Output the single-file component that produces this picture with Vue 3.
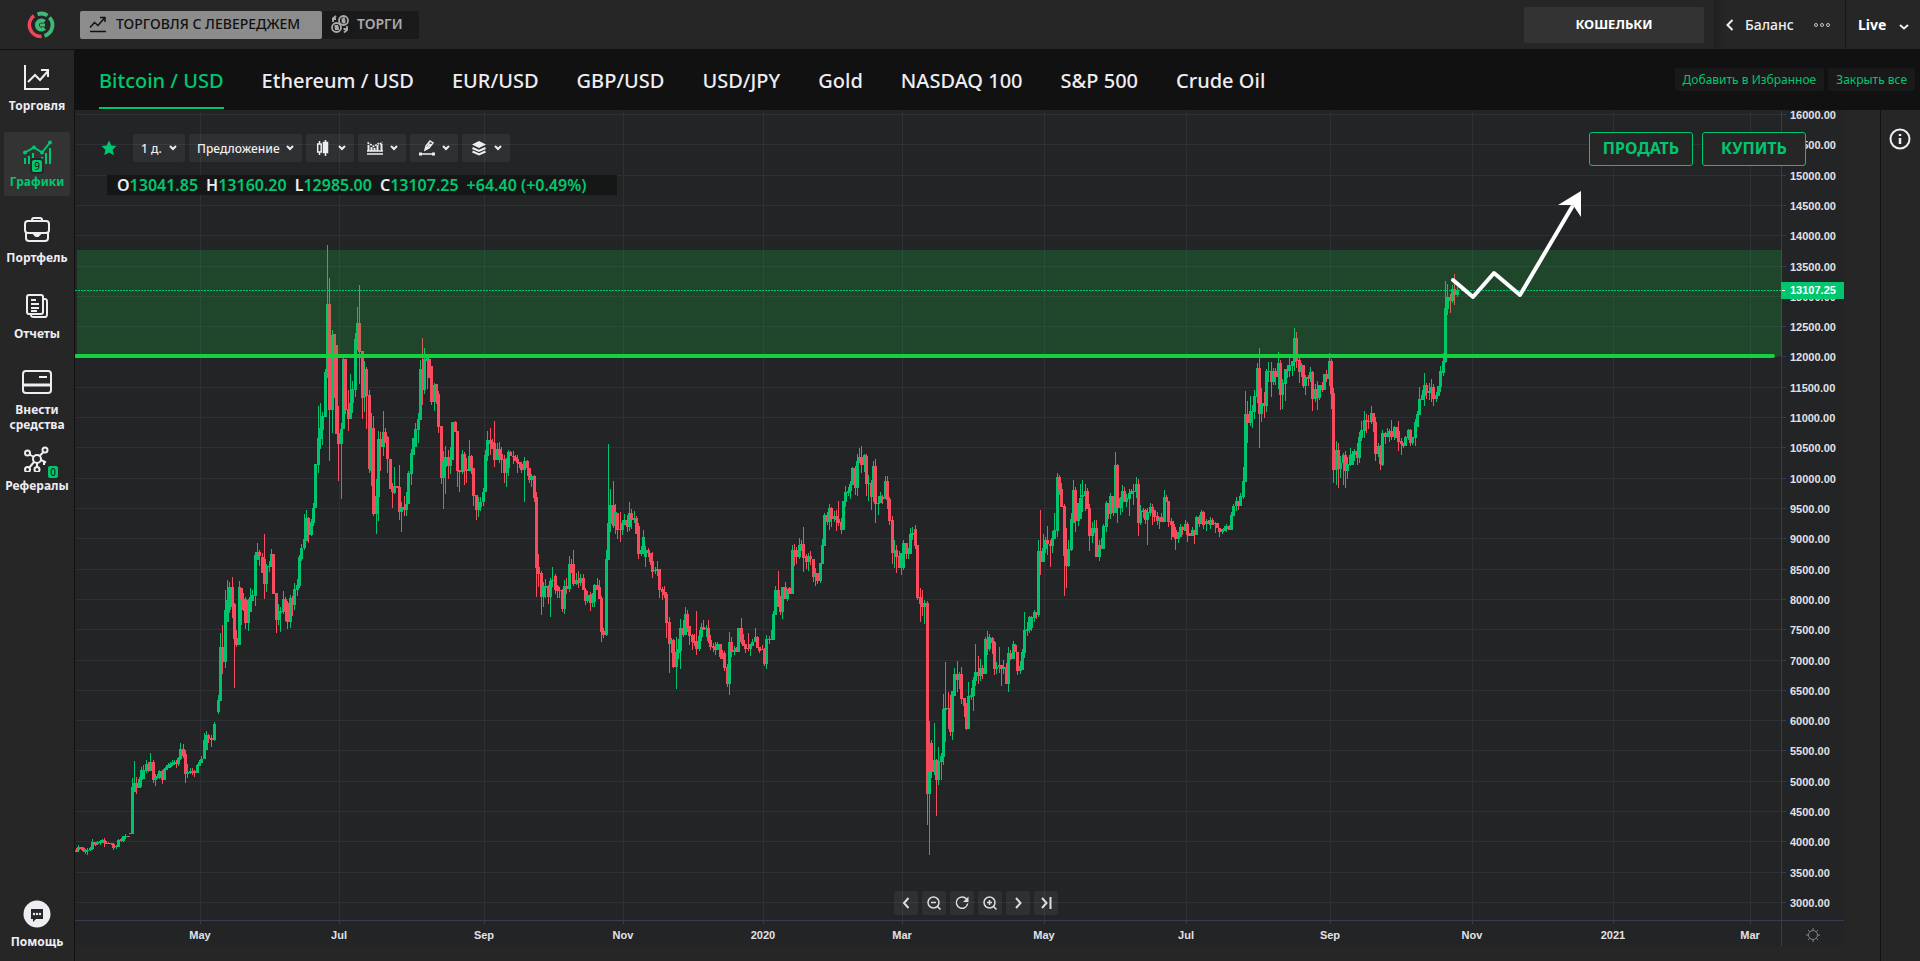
<script setup>
import { ref } from 'vue'

const markets = ['Bitcoin / USD', 'Ethereum / USD', 'EUR/USD', 'GBP/USD', 'USD/JPY', 'Gold', 'NASDAQ 100', 'S&P 500', 'Crude Oil']
const activeMarket = ref(0)

const menu = [
  { id: 'trade', lines: ['Торговля'] },
  { id: 'charts', lines: ['Графики'], badge: '9' },
  { id: 'portfolio', lines: ['Портфель'] },
  { id: 'reports', lines: ['Отчеты'] },
  { id: 'deposit', lines: ['Внести', 'средства'] },
  { id: 'referrals', lines: ['Рефералы'], badge: '0' },
]

const ohlc = [['O', '13041.85'], ['H', '13160.20'], ['L', '12985.00'], ['C', '13107.25'], ['', '+64.40 (+0.49%)']]
const chartTools = ['candles', 'indicators', 'draw', 'layers']
const navTools = [['back', 'Назад'], ['out', 'Уменьшить'], ['reset', 'Сбросить'], ['in', 'Увеличить'], ['next', 'Вперед'], ['last', 'В конец']]

const prices = Array.from({ length: 27 }, (_, i) => ({
  label: (16000 - i * 500).toFixed(2),
  y: Math.round(114 + (i * 788) / 26),
}))
const months = [
  [200, 'May'], [339, 'Jul'], [484, 'Sep'], [623, 'Nov'], [763, '2020'], [902, 'Mar'],
  [1044, 'May'], [1186, 'Jul'], [1330, 'Sep'], [1472, 'Nov'], [1613, '2021'], [1750, 'Mar'],
]

// Sessions: direction + x, body top, body bottom, then optional wick ends, in units of the period's own step.
const periods = [
  { x: 70, y: 230, sx: 3, sy: 2.45, data: `r19 1519 1523 1514 1525,g26 1512 1520 1507 1524,r34 1512 1516 1512 1518,r41 1514 1522 1512 1524,g47 1519 1523 1516 1529,g53 1520 1522 1514 1531,g60 1515 1520 1512 1521,g68 1499 1516 1492 1518,r75 1500 1507 1499 1509,g83 1500 1505 1497 1507,g90 1497 1503 1495 1506,g97 1494 1500 1493 1502,r103 1494 1503 1490 1512,r109 1502 1504 1498 1505,r115 1502 1504 1499 1505,r125 1503 1505 1501 1507,r131 1504 1513 1502 1519,g138 1509 1512 1506 1516,g146 1494 1511 1491 1512,r153 1492 1498 1489 1499,g159 1485 1498 1485 1499,g167 1485 1487 1480 1492,r174 1485 1487,g180 1477 1481,g187 1365 1480 1343,g193 1355 1377 1301,r200 1355 1366 1340 1382,g208 1345 1366 1340 1367,g214 1340 1347 1316 1365,g214 1323 1347,g220 1323 1346 1311,g229 1308 1325 1298 1330,r235 1308 1325 1303 1328,g242 1303 1325 1281,r250 1303 1347 1298 1355,g257 1343 1347 1333 1362,g263 1338 1343 1333 1345,g269 1325 1343 1323 1346,r277 1325 1347 1323 1357,g284 1320 1347 1318,g290 1316 1322 1311 1324,g296 1310 1318 1307,g302 1308 1316 1303 1318,g308 1305 1310 1299 1313,g314 1303 1308 1298 1311,r320 1304 1309 1298 1318,g326 1293 1308 1291 1313,g332 1272 1296 1257 1298,r340 1272 1288 1259 1293,r347 1284 1333 1274 1355,g353 1328 1333 1308 1342,g362 1326 1330 1318 1333,r367 1325 1330 1318 1335,r374 1326 1330 1323 1340,g383 1311 1330 1308,g389 1303 1312 1298,g395 1295 1305 1289,g404 1250 1296 1232,g409 1237 1274 1227,r416 1237 1247 1235 1257,r425 1244 1249 1237 1267,g434 1210 1249 1205 1252,g446 1151 1181 1139 1186,g452 1022 1154 987,r458 1022 1058 968 1088,g467 932 1058 882 1073,g473 907 960 857,g479 875 932 862 938,r488 875 924 850 950,r494 917 1002 914 1122,r499 1000 1017 980 1022,g509 875 1017 860,r515 878 907 877 968,r521 905 932 889 933,r527 905 963 898 978,g536 907 963 903 982,g542 900 935 877 937,g548 894 908 882,g557 796 896 789 921,g563 789 808 767,r569 789 799 784 823,r578 800 840 791,r584 805 867 745 904,g590 823 867 818 887,g599 823 826 810 838,g605 794 826 782,r611 794 891,r620 889 955 889 987,g626 935 955 916 968,g632 933 938 924 985,g641 904 935 884 941,r647 904 935 898 958,r653 915 960 908 978,g662 902 960 894 975,r668 902 919 896 946,g674 880 919 865 931,g683 870 882 855 896,g689 800 872 796 877,g695 778 805 769 810,g704 758 779 697 784,g710 706 762 685,r716 706 747 703 767,g725 715 747 708 750,g731 680 718 669 724,g737 573 682,g746 510 576 430 595,g752 485 513 424 537,g758 456 490 446 527,g767 347 458 340,g773 181 363 37,r779 181 441 118 566,g788 257 441 245 497,r794 256 411,r800 282 500,r806 497 524 432 615,g815 487 524 472 659,g821 315 488 305,r827 315 441 451,r836 438 463 393 492,g842 425 463 353,g848 390 425 370 448,g857 267 392 252 408,g863 228 294 189,r869 228 299 135 377,r878 296 412 463,g884 340 410 322 446,r890 340 407 336 488,r899 404 586 392 595,g905 484 590 448 627,r911 484 696 456 701,g920 652 696 610 745,g926 512 654 492 712,r932 512 531 495 590,g941 495 532 443 554,r947 495 521 485,r953 508 562 505 595,r962 562 635,r968 630 643 620 681,g974 627 644 581 647,r983 627 632,r989 629 690 576 710,g995 679 690 666 740,r1004 679 687 652 701,g1010 671 687 643 701,g1016 595 671 590,g1025 546 598 537 625,g1031 510 551,g1037 488 532 473,g1046 463 490 448 522,g1052 341 465 318,r1058 341 392 265 429,g1064 315 392 289 402,g1073 312 320 310 390,r1079 315 363,r1085 333 421 429,g1094 380 421 375 443,r1100 378 404 377 426,r1106 402 483 395 497,r1115 480 608 622,g1121 566 608 541 684,g1127 556 580 529 647,r1136 556 578 539 610,g1142 562 578 532 598,g1148 470 563,r1157 470 495 468,r1163 493 590 630,r1169 588 593 642,g1178 549 593 539 598,r1184 549 590 544 625,r1190 585 590 559 620,g1199 553 590 514,r1205 554 584 551 598,r1211 583 652 676,r1220 650 686 710,g1226 676 686 654 703,g1232 666 679 654 688,g1241 643 667 632 676,g1247 551 643 539,g1253 514 554 492 566,r1262 514 524 485 551,r1268 519 536 512,r1274 522 563 468 581,g1283 536 563 522,r1289 536 551 519 571,r1295 548 563 532 595,r1304 562 595 551 620,g1310 581 595 559 630,g1316 544 582 539 602,r1322 544 554 541,r1331 553 557 541 573,r1337 555 566 551,r1343 560 571 551 595,r1349 568 573 583,r1355 573 587 568 595,g1364 566 587 556 666,r1373 566 584 563 602,r1379 584 612 620,g1385 603 612 598 630,r1394 603 657 600 666` },
  { x: 450, y: 330, sx: 3, sy: 3, data: `r260 500 714 486 801,r266 712 732 672 770,r275 730 801 723 855,g281 768 801 756 831,g287 768 774 747 804,r296 768 801 765 822,g302 753 801 744 861,g308 749 753 711 771,r317 738 780 732 792,r323 768 782 765 804,r329 779 783 771 804,r338 780 837 777 846,g344 768 837 750 852,r350 768 777 744 792,g359 702 777 678 786,r365 702 730 687,r371 702 762 660 768,g380 750 762 729 765,r386 750 759 723 774,g392 744 759 732 768,r401 744 780 732,r407 780 813 774 825,g413 794 813 783 819,r422 795 819 786 843,g428 792 819 789 831,g434 765 816 762 831,r443 766 780 744,r449 771 807 750,r455 804 906 798 936,r461 904 914 894 924,g470 687 914 660 917,g476 580 690 342,g482 525 583 477 606,r491 525 588 453 594,g497 546 587 522 612,r503 549 600 627,r512 596 600 546 636,g518 579 600 570 614,g524 570 585 552,r533 570 591 555 606,g539 549 591 516 603,r545 549 570 537 597,g554 564 570 543 579,r560 565 612 558,r566 588 672 580 687,g575 660 672 648 678,g581 621 672 600,g587 660 681 648 711,r596 660 668 654 682,r602 668 697 705,r608 694 726 666 744,g617 720 724 711 732,g623 717 723 693 738,r629 717 780 804,r638 777 785 770 810,r644 786 795 768 804,r650 792 879 786 924,r659 877 942 861 1029,g665 931 942 924 970,r671 930 1011 927 1014,g680 965 1011 921 1077,g686 958 968 927 986,g692 894 963 867 1017,r701 895 915 870 921,g707 852 915 831,r713 852 890 840 905,r719 888 917 945,r728 915 936 912 960,r734 933 940 912 948,r740 934 957 843 975,g749 918 957 900 963,g755 891 920 879 933,r761 891 900 870,g770 893 897 885 920,r776 894 933 870 939,r782 930 951 915 960,r791 948 954 939 966,r797 951 960 936 975,g803 942 960 936,r812 942 981 987,r818 970 988 960,r824 968 1014 963 1023,r833 1012 1062 1002 1071,g839 936 1062 906 1095,r845 936 966 921 981,g854 960 966 948 975,r860 954 966 951,g866 894 966,r875 894 936 864 942,r881 930 948 912,r887 942 957 969,r896 954 957 909 963,g902 942 957 978,g908 936 948 927,g917 921 936 894,r923 921 954 918,r929 950 963 969,r938 957 961 945,r944 957 1002 954 1008,g950 927 1002 915 1017,g959 927 930 918 942` },
  { x: 740, y: 420, sx: 3, sy: 3, data: `g98 630 660,g101 582 660 573,g107 510 585 498,r116 510 560 453,r122 528 576 585,g128 501 576 597,r137 501 537 486,g143 507 537 543,r149 504 521 500,g158 390 522 375,r164 390 410 372 438,r170 390 410 381 432,g179 375 411 354 417,g185 372 392 360,r191 372 413 321 456,r200 408 425 402 447,g206 408 426 399 453,r212 408 418 393 435,r221 417 471 486,g227 459 471 444 498,r233 459 483 492,g242 429 483 489,g248 375 432 357,g254 285 378 279,r263 285 305 276 315,g269 264 305 252 330,r275 264 297 261 321,g284 288 297 273 306,r290 288 300 270 333,r296 297 309 243 318,r305 306 330 294 342,g311 243 330,g317 216 246 198 261,g326 214 218 200 228,g332 192 212 183 237,g338 144 195 140,r347 144 204 138 225,g353 123 204 102 228,g359 111 129 84,r365 111 135 78 159,g374 105 135 101 156,r380 107 192 102 228,g386 189 192 165 243,r395 189 231 180 270,g401 138 231 123 246,r407 138 252 117 309,g416 248 252 228 285,g422 228 250 216,r428 230 237 225 252,g437 183 237 168,r443 183 240 168 267,r449 237 303 231 315,r458 300 399 288 432,g464 390 399 360 444,r470 390 411 375 459,r479 408 444 393,g485 399 444 465,g491 369 444 360 450,r500 369 402 417,g506 384 402 417,g512 342 402 324,g518 340 345 321 360,r527 327 378 315 387,r533 375 534 540,r542 531 552 504 606,r548 548 560 510 588,g554 549 561 540 612,r563 549 1122 543 1215,g569 1055 1122 903 1305,r575 969 1056 960 1074,g584 1020 1056 909 1065,r590 1020 1080 1017 1188,g596 1023 1080 981 1095,g605 1008 1026 999 1080,g611 867 1011 822 1035,g617 864 869 726 966,r626 864 867 816,r629 866 927,r632 866 936 825 948,g638 813 936 960,g644 762 828 744,r653 762 780 723 816,g659 762 780 756 807,r665 762 837 741 852,r674 834 858 892,r680 855 927 849 930,g686 828 927 786,g695 825 831 804 840,g701 780 828 771 873,g707 756 783 672 798,r716 756 768 708 792,g722 744 768 717 783,r728 744 762 735 777,g737 657 762 651,r743 657 687 633 705,g749 652 687 642 693,r758 654 668 651 702,r764 666 747 663 765,g770 740 747 726 762,g779 735 742 681 759,r785 735 747 798,g791 741 746 720 762,r800 742 792 729,g806 699 792 681 816,r812 699 717 690 720,g821 672 717 663,r827 674 697 671,r833 696 753 765,g842 738 753 723 762,g848 696 750 687,g854 630 699 576 714,g863 627 633 606 648,g869 591 630 588 639,g875 591 624 588 633,g884 576 594 570 606,r890 576 585 597,g896 393 585 360 591,r902 393 426 270 465` },
  { x: 1000, y: 320, sx: 3, sy: 3, data: `g131 684 726 642,g137 660 687 651 699,r143 660 672 618 705,r152 672 678 660 741,g158 654 678 633 699,g164 630 657 579,g173 471 633 459 651,r179 471 510 465 525,r185 507 560 489,r194 558 708 552 828,r200 706 738 624 804,g206 687 738 660 741,g215 597 690 579 693,g221 510 609 480,r227 510 603 501 636,g236 549 603 618,g242 534 597 492,g248 525 530 480 576,g257 513 528 492 573,r263 513 567 504,r269 564 648 552 693,g278 624 648 606 669,g284 624 640 600,r290 624 711 600,g299 675 711 660 723,r305 675 687 654,g311 618 687 612,g320 549 621 543 636,r326 549 582 597,g332 528 582 519 597,r341 528 579 588,g347 435 579 396,r353 435 564 432 609,g362 534 564 531 585,g368 513 540 495 576,r374 513 546 501,g380 534 546 522 561,g389 519 537 507 588,g395 512 522 507,r401 513 517 492 555,g410 492 516 471 534,r416 492 609 477 648,g422 573 609 555 615,g431 570 576 564 594,r437 570 600 567 612,g443 576 600 564 675,g452 561 579 549 588,r458 561 573 552 615,r464 570 590 606,r473 588 603 576 615,g479 591 604 627,r485 591 606 579,g494 531 606 510,r500 531 545 525,r506 543 606 621,r515 603 615 594 660,r521 612 651 603,r527 630 657 621 690,g536 636 657 669,g542 621 652 612,r548 621 630 618 645,g557 612 632 600,r563 612 645 606 666,r569 640 648,g578 630 648 621,r584 630 645 672,g590 591 645 588,r599 591 612 585 621,g605 576 612 570,r611 576 615 573 627,g620 603 612 597 633,r626 603 612 600,g632 600 614 591 627,r638 600 615 594,g647 609 613 606 639,r653 610 625,r659 624 636 651,g668 627 636 642,g674 624 632 618,g680 618 627 612 636,r689 618 630 615,g695 585 630 576,g701 558 588 552,g710 543 558 531 573,r716 543 558 570,g722 528 558 519,g731 483 531 441 537,g737 282 486 213,r743 282 309 243 369,g752 273 309 228 318,g758 273 277 255 324,g764 228 276 210 297,g773 144 231 129 249,r779 144 282 84 384,g785 249 282 204 306,r794 249 258 216 294,g800 153 258 147 276,g806 153 156 126 186,r815 153 186 126 231,g821 153 186 144 195,r827 153 170 144 195,g836 129 171 96 207,r842 129 225 120 270,g848 189 225 177 267,g857 147 192 243,r863 147 153 135 174,g869 135 153 111 171,g878 123 138 168,g884 54 126 24 153,r890 54 123 36 144,r899 120 156 111 189,g905 135 156 129 171,r911 135 198 204,g917 171 198 165 225,r926 171 177 165 198,g932 156 177 141 186,r938 156 237 153 273,g947 207 237 192 246,r953 207 234 183 270,g959 195 234 240,r968 195 210 186 216,g974 162 210,r980 162 177 150 186,g989 123 177 99 198,r995 123 222 117 267,r1001 219 450 204 489,g1010 390 450 363 495,r1016 390 447 369 504,g1022 429 447 408 474,g1031 405 429 399 495,r1037 405 453 393 504,g1043 432 453 411 477,g1052 405 435 384 438,g1058 402 435 393,g1064 393 405 387 423,r1073 393 414 369 435,g1079 351 414 336 429,g1085 330 354 303 363,g1094 300 333 273 354,r1100 300 305 282 339,r1106 302 306 285 327,g1115 279 306 258 312,r1121 279 306 336,r1127 306 402 291 423,g1136 378 402 369 411,r1142 378 432 375 450,g1148 339 435 330 438,r1157 339 351 336 372,g1163 339 351 324,g1169 333 351 327 366,r1175 333 351 300 360,g1184 321 351 318 360,r1190 321 354,r1196 334 366 303 393,r1205 363 372 354 405,r1211 370 378 384,g1217 351 378 348,g1226 330 354 327 360,r1232 330 369 327 378,g1238 351 369 375,g1247 306 354 297 378,g1253 282 321 273,g1259 237 285 201,g1268 225 240 210,g1274 195 228 159 258,r1280 195 219 189 237,g1289 213 219 189 240,g1295 201 218 177 246,r1301 201 237 192 258,g1310 225 237 216 246,g1316 198 228,g1322 153 201 138 216,g1331 123 159 99 168` },
  { x: 1420, y: 180, sx: 3, sy: 3, data: `g77 384 546 303 549,g83 350 387 312 405,r92 351 363 342 399,g98 327 363 315 369,r104 327 345 282 375,g113 331 345 321 351` },
]

const candles = periods.flatMap(p => p.data.split(',').map(item => {
  const up = item[0] === 'g'
  const [x, ...ys] = item.slice(1).split(' ').map(Number)
  const px = p.x + Math.floor(x / p.sx)
  const toY = v => Math.round(p.y + v / p.sy)
  const top = toY(ys[0])
  const bottom = Math.max(toY(ys[1]), top + 1)
  const high = Math.min(toY(Math.min(...ys)), top)
  const low = Math.max(toY(Math.max(...ys)), bottom)
  return { up, d: `M${px - 1} ${top}h3v${bottom - top}h-3zM${px} ${high}h1v${low - high}h-1z` }
}))
</script>

<template>
  <div class="app">
    <header class="topbar">
      <a class="logo" href="#" aria-label="Главная">
        <svg width="28" height="28" viewBox="0 0 28 28" fill="none">
          <path d="M14.500 25.500A11.500 11.500 0 0 1 7 4.800" stroke="#f0485a" stroke-width="3.600" />
          <path d="M10.500 3.200A11.300 11.300 0 0 1 20.500 4.500M22.500 6.500a11.300 11.300 0 0 1-5 18.400" stroke="#3dba77" stroke-width="3.800" />
          <path d="M17.500 10.700a4.500 4.500 0 1 0 .1 6.600" stroke="#3dba77" stroke-width="4" />
          <path d="M13 14h5" stroke="#3dba77" stroke-width="3" />
        </svg>
      </a>
      <div class="modes">
        <button class="mode mode-on">
          <svg width="18" height="18" viewBox="0 0 18 18" fill="none" stroke="currentColor" stroke-width="1.500">
            <path d="M1 16.500h16M1 12.500l4.500-5 3.500 3L15.500 3M11 2.500h5V7" />
          </svg>
          ТОРГОВЛЯ С ЛЕВЕРЕДЖЕМ
        </button>
        <button class="mode mode-off">
          <svg width="18" height="18" viewBox="0 0 18 18" fill="none" stroke="currentColor" stroke-width="1.800">
            <circle cx="12.500" cy="5.500" r="4.500" /><circle cx="5.500" cy="12.500" r="4.500" />
            <path d="M11.500 3.500v4M11.500 3.500h1.500v2h-1.500 2v2h-2M7 11H4.500v1.500H7V14H4M2 7V3.500L5 1M1 4h4M16 11v4l-3 2.500M12.500 14h4.500" />
          </svg>
          ТОРГИ
        </button>
      </div>
      <button class="wallets">КОШЕЛЬКИ</button>
      <div class="balance">
        <svg width="8" height="12" viewBox="0 0 8 12" fill="none" stroke="#eee" stroke-width="2"><path d="M6.500 1 1.500 6l5 5" /></svg>
        <span>Баланс</span>
        <svg class="dots" width="18" height="6" viewBox="0 0 18 6" fill="none" stroke="#c4c4d4"><circle cx="3" cy="3" r="1.500" /><circle cx="9" cy="3" r="1.500" /><circle cx="15" cy="3" r="1.500" /></svg>
      </div>
      <button class="account">
        Live
        <svg width="10" height="10" viewBox="0 0 10 10" fill="none" stroke="#eee" stroke-width="2"><path d="m1 5 4 3.500L9 5" /></svg>
      </button>
    </header>

    <div class="body">
      <nav class="sidebar">
        <div class="menu">
          <a v-for="m in menu" :key="m.id" href="#" class="item" :class="{ current: m.id === 'charts' }">
            <svg class="item-icon" width="30" height="28" viewBox="0 0 30 28" fill="none" stroke="currentColor" stroke-width="2">
              <path v-if="m.id === 'trade'" d="M3 1v24h24M6 18l7-7 5 5L26 7M19 6h7v7" />
              <template v-if="m.id === 'charts'">
                <path d="M3 12.500l9-5 8 5L28 2.500" />
                <path d="M3 18v6M7 16v8M11 13v5M20 17v7M24 13v11M28 8v16" />
                <g fill="currentColor" stroke="none"><circle cx="3" cy="12.500" r="2" /><circle cx="12" cy="7.500" r="2" /><circle cx="20" cy="12.500" r="2" /><circle cx="28" cy="2.500" r="2" /></g>
              </template>
              <template v-if="m.id === 'portfolio'">
                <rect x="3" y="5" width="24" height="12" rx="3" /><path d="M4 16v6a3 3 0 0 0 3 3h16a3 3 0 0 0 3-3v-6M10 5V4a2 2 0 0 1 2-2h6a2 2 0 0 1 2 2v1" /><path d="M12 18h6l-2 2h-2z" fill="currentColor" />
              </template>
              <template v-if="m.id === 'reports'">
                <rect x="5" y="3" width="16" height="19" rx="2" /><path d="M9 8h5M9 12h8M9 16h8M9 19h6M22 7c3 0 3 1 3 3v12c0 3-1 3-3 3H12c-2 0-3 0-3-2" />
              </template>
              <template v-if="m.id === 'deposit'">
                <rect x="1" y="3" width="28" height="22" rx="3" /><path d="M1 17h28" stroke-width="3" /><path d="M17 9h8" />
              </template>
              <template v-if="m.id === 'referrals'">
                <circle cx="15" cy="15" r="4" /><circle cx="5.500" cy="9" r="2.500" /><circle cx="23" cy="6" r="2.500" /><circle cx="5.500" cy="25.500" r="2.500" /><circle cx="15" cy="25.500" r="2.500" /><path d="M7.500 10.500 12 13M21.500 8l-4 4M7 24l5-6M15 19v4M19 16l5 2.500M22 17v4" />
              </template>
            </svg>
            <span v-if="m.badge" class="badge" :class="'badge-' + m.id">{{ m.badge }}</span>
            <span v-for="l in m.lines" :key="l" class="item-text">{{ l }}</span>
          </a>
        </div>
        <a class="item" href="#">
          <svg class="item-icon" width="30" height="28" viewBox="0 0 30 28">
            <circle cx="15" cy="14" r="13.500" fill="#ededf3" /><path d="M9 9h12v10h-7l-3 3v-3H9z" fill="#262626" /><g fill="#ededf3"><circle cx="12" cy="14" r="1.200" /><circle cx="15" cy="14" r="1.200" /><circle cx="18" cy="14" r="1.200" /></g>
          </svg>
          <span class="item-text">Помощь</span>
        </a>
      </nav>

      <main class="main">
        <div class="tabs">
          <button v-for="(m, i) in markets" :key="m" class="tab" :class="{ active: i === activeMarket }" @click="activeMarket = i">{{ m }}</button>
          <div class="tab-actions">
            <button class="mini">Добавить в Избранное</button>
            <button class="mini">Закрыть все</button>
          </div>
        </div>

        <div class="workspace">
          <section class="stage">
            <svg class="chart" viewBox="75 110 1805 851" role="img" aria-label="Bitcoin / USD">
              <rect x="75" y="110" width="1769" height="836" fill="#232426" />
              <g fill="#2f3036">
                <rect v-for="p in prices" :key="p.y" x="76" :y="p.y" width="1705" height="1" />
                <rect v-for="m in months" :key="m[0]" :x="m[0]" y="111" width="1" height="809" />
              </g>
              <g fill="#3a3a52">
                <rect x="75" y="920" width="1769" height="1" />
                <rect x="1781" y="111" width="1" height="835" />
                <rect v-for="p in prices" :key="p.y" x="1782" :y="p.y" width="4" height="1" />
                <rect v-for="m in months" :key="m[0]" :x="m[0]" y="921" width="1" height="3" />
              </g>
              <path v-for="(c, i) in candles" :key="i" :d="c.d" :fill="c.up ? '#00c46d' : '#f84b5e'" shape-rendering="crispEdges" />
              <rect x="77" y="250" width="1705" height="106" fill="#0dd13f" fill-opacity="0.200" />
              <path d="M75 290.500H1781" stroke="#00c76f" stroke-dasharray="2 1" />
              <path d="M76 356H1773" stroke="#13d13f" stroke-width="4" stroke-linecap="round" />
              <path d="M1453 280l20 17 21-24 26 22 52-88" fill="none" stroke="#fff" stroke-width="4" stroke-linecap="round" stroke-linejoin="round" />
              <path d="M1581 191v26l-8-12-15 0z" fill="#fff" />
              <g class="axis">
                <text v-for="p in prices" :key="p.y" x="1790" :y="p.y + 5">{{ p.label }}</text>
                <text v-for="m in months" :key="m[0]" :x="m[0]" y="939" text-anchor="middle">{{ m[1] }}</text>
              </g>
              <rect x="1781" y="282" width="63" height="17" fill="#00c76f" />
              <rect x="1782" y="290" width="3" height="1" fill="#fff" />
              <text class="last" x="1790" y="294">13107.25</text>
              <g fill="none" stroke="#85858d"><circle cx="1813" cy="935" r="4.500" /><path d="M1813 928v2M1813 940v2M1806 935h2M1818 935h2M1808 930l1.500 1.500M1816.500 938.500l1.500 1.500M1808 940l1.500-1.500M1816.500 931.500l1.500-1.500" /></g>
            </svg>

            <div class="toolbar">
              <button class="star" aria-label="Избранное"><svg width="16" height="16" viewBox="0 0 16 16"><path d="M8 .5l2.300 5 5.200.6-3.900 3.600 1.100 5.600L8 12.400l-4.700 2.900 1.100-5.600L.5 6.100l5.200-.6z" fill="#00c76f" /></svg></button>
              <button class="tool interval">1 д. <svg class="chev" viewBox="0 0 8 6"><path d="m1 1 3 3 3-3" /></svg></button>
              <button class="tool offer">Предложение <svg class="chev" viewBox="0 0 8 6"><path d="m1 1 3 3 3-3" /></svg></button>
              <button v-for="t in chartTools" :key="t" class="tool" :aria-label="t">
                <svg width="18" height="16" viewBox="0 0 18 16" fill="none" stroke="#eee" stroke-width="1.500">
                  <template v-if="t === 'candles'"><path d="M5.500 1v3M5.500 12v3M11.500 0v16" /><rect x="3.700" y="4" width="3.500" height="8" /><rect x="9.500" y="2.500" width="4" height="10" fill="#eee" /></template>
                  <template v-if="t === 'indicators'"><path d="M1 14h16M1 11h16" /><path d="M2.500 5v6M5.500 7v4M8.500 8v3M11.500 5v6M15.500 4v7" stroke-width="2" /><path d="M1.500 2.500l4 2.500 2.500 1.500L12 3.500l1.500 1L16.500 2" stroke-dasharray="2 1" /></template>
                  <template v-if="t === 'draw'"><path d="M7 10l1-4 4-5 3 2-4 5zM10 3l3 2M2 14h14M8 9l4-5" /><path d="M1 12.500h3v3H1zM14 12.500h3v3h-3z" fill="#eee" stroke="none" /></template>
                  <template v-if="t === 'layers'"><path d="M9 1l7 3.500L9 8 2 4.500z" fill="#eee" stroke="none" /><path d="M2.500 8 9 11l6.500-3M2.500 11.500l6.500 3 6.500-3" stroke-width="2" /></template>
                </svg>
                <svg class="chev" viewBox="0 0 8 6"><path d="m1 1 3 3 3-3" /></svg>
              </button>
            </div>

            <div class="ohlc"><span v-for="o in ohlc" :key="o[1]"><b>{{ o[0] }}</b>{{ o[1] }}</span></div>

            <div class="deal">
              <button>ПРОДАТЬ</button>
              <button>КУПИТЬ</button>
            </div>

            <div class="nav-tools">
              <button v-for="n in navTools" :key="n[0]" :aria-label="n[1]">
                <svg width="16" height="16" viewBox="0 0 16 16" fill="none" stroke="#ddd" stroke-width="1.500">
                  <path v-if="n[0] === 'back'" d="M10.500 3 6 8l4.500 5" stroke-width="2" />
                  <template v-if="n[0] === 'out' || n[0] === 'in'"><circle cx="7.500" cy="7.500" r="5.500" /><path d="M11.500 11.500l3 3M5 7.500h5" /><path v-if="n[0] === 'in'" d="M7.500 5v5" /></template>
                  <template v-if="n[0] === 'reset'"><path d="M12.500 4A5.700 5.700 0 1 0 13.700 8.500" /><path d="M14.500 1.500v5.500H9z" fill="#ddd" stroke="none" /></template>
                  <path v-if="n[0] === 'next'" d="M6 3l4.500 5L6 13" stroke-width="2" />
                  <path v-if="n[0] === 'last'" d="M4 3l4.500 5L4 13M12.500 2v12" stroke-width="2" />
                </svg>
              </button>
            </div>
          </section>
          <aside class="info">
            <button aria-label="Информация"><svg width="22" height="22" viewBox="0 0 22 22" fill="none" stroke="#ededf3" stroke-width="2"><circle cx="11" cy="11" r="9.500" /><path d="M11 10v6M11 6v2" stroke-width="2.500" /></svg></button>
          </aside>
        </div>
      </main>
    </div>
  </div>
</template>

<style>
body { background: #262626; }
</style>

<style scoped>
.app { min-height: 100vh; display: flex; flex-direction: column; background: #262626; color: #ededf3; font-family: "Noto Sans", "Open Sans", sans-serif; }
.app * { box-sizing: border-box; }
button { font: inherit; color: inherit; border: 0; padding: 0; background: none; cursor: pointer; white-space: nowrap; }
a { color: inherit; text-decoration: none; }
svg { display: block; flex: none; }

.topbar { display: flex; align-items: center; height: 49px; }
.logo { width: 80px; padding-left: 27px; }
.modes { display: flex; flex: 1; }
.mode { display: flex; align-items: center; height: 28px; padding: 0 9px 2px; border-radius: 2px; font-size: 14px; font-weight: 500; }
.mode-on { width: 242px; gap: 9px; background: #8c8c8c; color: #111; }
.mode-off { width: 97px; gap: 8px; background: #1a1a1a; color: #aaa; font-weight: 600; }
.wallets { width: 180px; height: 36px; margin-right: 10px; padding-bottom: 2px; border-radius: 2px; background: #333; color: #fff; font-size: 13px; font-weight: 700; }
.balance { display: flex; align-items: center; align-self: stretch; width: 131px; padding-left: 12px; gap: 11px; background: linear-gradient(90deg, #202020, #262626 12px); font-size: 14px; font-weight: 500; }
.dots { margin-left: 8px; }
.account { display: flex; align-items: center; justify-content: space-between; align-self: stretch; width: 75px; padding: 0 11px 0 12px; border-left: 1px solid #171717; color: #fff; font-size: 14px; font-weight: 700; }

.body { flex: 1; display: flex; }
.sidebar { width: 75px; display: flex; flex-direction: column; justify-content: space-between; padding: 6px 4px 5px; border-right: 1px solid #111; border-top: 1px solid #111; }
.menu { display: grid; grid-auto-rows: 64px; gap: 12px; }
.item { position: relative; display: flex; flex-direction: column; align-items: center; height: 64px; padding-top: 8px; border-radius: 2px; font-size: 12px; line-height: 15px; font-weight: 700; }
.item-icon { margin-bottom: 6px; }
.current { background: #333; color: #00c76f; }
.badge { position: absolute; width: 10px; height: 12px; border-radius: 2px; background: #00c76f; color: #222; font-size: 10px; line-height: 12px; text-align: center; font-weight: 500; }
.badge-charts { left: 28px; top: 28px; box-shadow: 0 0 0 2px #262626; }
.badge-referrals { right: 12px; top: 30px; }

.main { flex: 1; min-width: 0; display: flex; flex-direction: column; }
.tabs { display: flex; align-items: stretch; gap: 38px; height: 61px; padding: 0 5px 0 24px; background: #111; }
.tab { height: 60px; padding-top: 6px; padding-bottom: 2px; border-bottom: 2px solid transparent; font-size: 20px; font-weight: 500; }
.tab.active { color: #00c76f; border-bottom-color: #00c76f; }
.tab-actions { display: flex; align-items: center; gap: 4px; margin-left: auto; }
.mini { height: 23px; padding: 0 8px; border-radius: 2px; background: #191919; color: #00c76f; font-size: 12px; }

.workspace { flex: 1; display: flex; }
.stage { position: relative; flex: 1; min-width: 0; }
.chart { width: 100%; height: auto; }
.axis text, .last { font: 700 11px "Liberation Sans", Arial, sans-serif; fill: #e2e2e6; }
.last { fill: #fff; }
.info { width: 40px; padding: 18px 0 0 8px; border-left: 1px solid #111; }

.toolbar { position: absolute; left: 26px; top: 24px; display: flex; gap: 4px; }
.star { width: 28px; }
.tool { display: flex; align-items: center; justify-content: space-between; width: 48px; height: 28px; padding: 0 8px 0 8px; border-radius: 2px; background: rgba(255, 255, 255, 0.060); color: #eee; font-size: 12px; font-weight: 500; }
.interval { width: 52px; }
.offer { width: 113px; }
.chev { width: 8px; height: 6px; fill: none; stroke: #eee; stroke-width: 2; }
.ohlc { position: absolute; left: 32px; top: 65px; width: 510px; height: 20px; padding-left: 10px; display: flex; gap: 8px; background: #151716; color: #00c76f; font-size: 16px; line-height: 20px; font-weight: 600; white-space: nowrap; }
.ohlc b { color: #ededf3; font-weight: 600; }
.deal { position: absolute; right: 74px; top: 22px; display: flex; gap: 9px; }
.deal button { width: 104px; height: 34px; padding-bottom: 2px; border: 1px solid #00c76f; border-radius: 3px; background: #262626; color: #00c76f; font-size: 16px; font-weight: 700; }
.nav-tools { position: absolute; left: 0; right: 4px; bottom: 46px; display: flex; justify-content: center; gap: 4px; }
.nav-tools button { display: grid; place-items: center; width: 24px; height: 24px; border-radius: 2px; background: rgba(255, 255, 255, 0.060); }
</style>
